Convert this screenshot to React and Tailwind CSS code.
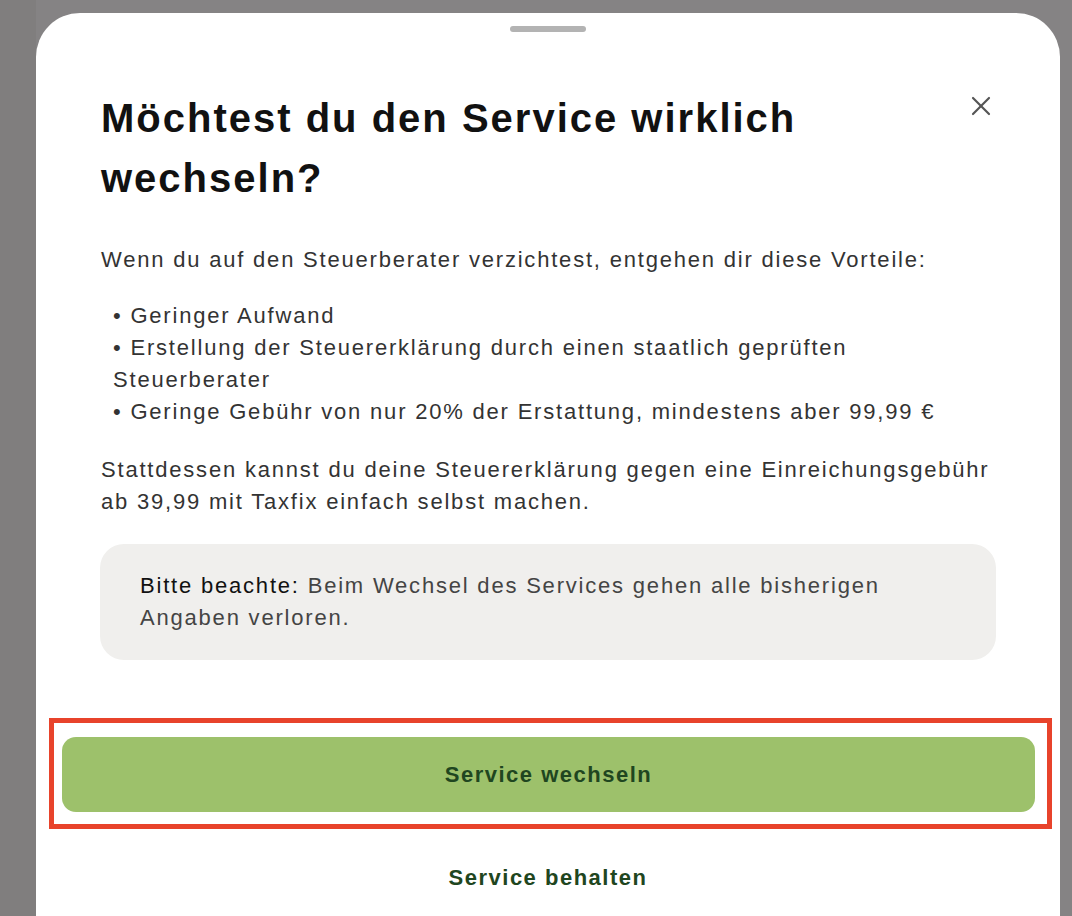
import { X } from "lucide-react";

export default function App() {
  return (
    <div
      className="w-[1072px] h-[916px] overflow-hidden bg-[#858384] flex"
      style={{ fontFamily: '"Liberation Sans", Arial, sans-serif' }}
    >
      <div className="w-[36px] shrink-0 bg-[#807e7e]" />
      <div className="flex-1 mt-[13px] mr-[12px] bg-white rounded-t-[44px] relative flex flex-col">
        <div className="flex justify-center pt-[13px]">
          <div className="w-[76px] h-[6px] rounded-full bg-[#b3b3b3]" />
        </div>

        <div className="px-[65px] pt-[56px]">
          <div className="flex items-start justify-between">
            <h1 className="text-[40px] leading-[60px] font-bold text-[#111] w-[780px] tracking-[2px]">
              Möchtest du den Service wirklich wechseln?
            </h1>
            <button className="mt-[2px] mr-[-2px] text-[#555]">
              <X size={32} strokeWidth={1.6} />
            </button>
          </div>

          <p className="mt-[36px] text-[22px] leading-[32px] text-[#333] tracking-[1.8px]">
            Wenn du auf den Steuerberater verzichtest, entgehen dir diese Vorteile:
          </p>

          <ul className="mt-[24px] pl-[12px] text-[22px] leading-[32px] text-[#333] tracking-[1.8px]">
            <li>• Geringer Aufwand</li>
            <li>
              • Erstellung der Steuererklärung durch einen staatlich geprüften
              <br />
              Steuerberater
            </li>
            <li>• Geringe Gebühr von nur 20% der Erstattung, mindestens aber 99,99 €</li>
          </ul>

          <p className="mt-[26px] text-[22px] leading-[32px] text-[#333] tracking-[1.8px]">
            Stattdessen kannst du deine Steuererklärung gegen eine Einreichungsgebühr ab 39,99 mit Taxfix einfach selbst machen.
          </p>

          <div className="mt-[26px] -ml-[1px] mr-[-1px] rounded-[24px] bg-[#f0efed] pl-[40px] pr-[80px] py-[26px] text-[22px] leading-[32px] text-[#444] tracking-[1.8px]">
            <span className="text-[#111]">Bitte beachte: </span>
            Beim Wechsel des Services gehen alle bisherigen Angaben verloren.
          </div>
        </div>

        <div className="mt-[58px] ml-[13px] mr-[8px] border-[5px] border-[#e8432b] pl-[8px] pr-[12px] pt-[14px] pb-[12px]">
          <button className="w-full h-[75px] rounded-[14px] bg-[#9dc16b] text-[22px] font-bold text-[#1f4620] tracking-[1.5px]">
            Service wechseln
          </button>
        </div>

        <div className="mt-[32px] text-center text-[22px] font-bold text-[#1f4620] tracking-[1.5px]">
          Service behalten
        </div>
      </div>
    </div>
  );
}
